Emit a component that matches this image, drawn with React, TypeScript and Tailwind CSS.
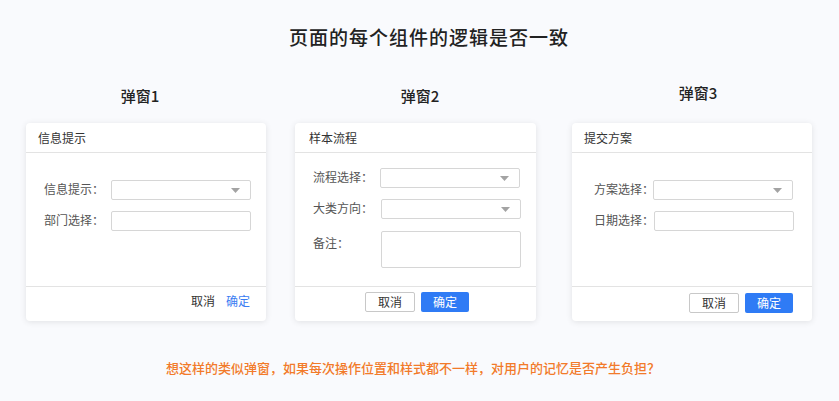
import React from "react";

const FONT = { fontFamily: '"Noto Sans CJK SC", "Noto Sans", sans-serif' };

function Caret() {
  return (
    <svg width="9" height="5" viewBox="0 0 9 5">
      <path d="M0 0 L9 0 L4.5 5 Z" fill="#a3a3a3" />
    </svg>
  );
}

function Select() {
  return (
    <div className="w-[140px] shrink-0 h-[20px] border border-[#d6d6d6] rounded-[2px] bg-white flex items-center justify-end pr-[10px]">
      <Caret />
    </div>
  );
}

function Input() {
  return <div className="w-[140px] shrink-0 h-[20px] border border-[#d6d6d6] rounded-[2px] bg-white" />;
}

function Row({ label, lw, children }: { label: string; lw: string; children: React.ReactNode }) {
  return (
    <div className="flex items-center h-[20px]">
      <div className={`${lw} shrink-0 whitespace-nowrap text-[12px] leading-[20px] text-[#555] pb-[2px]`}>{label}</div>
      {children}
    </div>
  );
}

function Header({ title, pl }: { title: string; pl: string }) {
  return (
    <div className={`h-[30px] border-b border-[#e3e3e3] flex items-center ${pl} text-[12px] text-[#333] pt-[1px]`}>
      {title}
    </div>
  );
}

export default function App() {
  return (
    <div className="w-[839px] h-[401px] bg-[#f9fafd] flex flex-col overflow-hidden" style={FONT}>
      <div className="pt-[23px] flex justify-center pl-[19px]">
        <span className="text-[19px] leading-[28px] tracking-[1px] font-medium text-[#222] whitespace-nowrap">
          页面的每个组件的逻辑是否一致
        </span>
      </div>

      <div className="mt-[32px] flex">
        {/* column 1 */}
        <div className="ml-[26px] w-[240px] flex flex-col">
          <div className="h-[40px] pt-[3px] pr-[12px] text-center text-[15px] leading-[20px] font-medium text-[#222]">弹窗1</div>
          <div className="h-[198px] bg-white rounded-[4px] shadow-[0_1px_6px_rgba(0,0,0,0.10)] flex flex-col">
            <Header title="信息提示" pl="pl-[12px]" />
            <div className="h-[133px] pt-[27px] pl-[18px] flex flex-col gap-[11px]">
              <Row label="信息提示：" lw="w-[67px]"><Select /></Row>
              <Row label="部门选择：" lw="w-[67px]"><Input /></Row>
            </div>
            <div className="h-[35px] border-t border-[#e3e3e3] flex items-center justify-end gap-[11px] pr-[16px] pb-[7px] text-[12px]">
              <span className="text-[#333]">取消</span>
              <span className="text-[#3a7cf2]">确定</span>
            </div>
          </div>
        </div>

        {/* column 2 */}
        <div className="ml-[29px] w-[241px] flex flex-col">
          <div className="h-[40px] pt-[3px] pl-[9px] text-center text-[15px] leading-[20px] font-medium text-[#222]">弹窗2</div>
          <div className="h-[198px] bg-white rounded-[4px] shadow-[0_1px_6px_rgba(0,0,0,0.10)] flex flex-col">
            <Header title="样本流程" pl="pl-[14px]" />
            <div className="h-[133px] pt-[15px] pl-[18px] flex flex-col">
              <Row label="流程选择：" lw="w-[67px]"><Select /></Row>
              <div className="h-[11px]" />
              <Row label="大类方向：" lw="w-[68px]"><Select /></Row>
              <div className="h-[12px]" />
              <div className="flex">
                <div className="w-[68px] shrink-0 pt-[2px] text-[12px] leading-[20px] text-[#555]">备注：</div>
                <div className="w-[140px] h-[37px] border border-[#d6d6d6] rounded-[2px] bg-white" />
              </div>
            </div>
            <div className="h-[35px] border-t border-[#e3e3e3] flex items-center justify-center gap-[6px] pl-[3px] pb-[4px] text-[12px]">
              <div className="w-[50px] h-[20px] border border-[#c8c8c8] rounded-[2px] bg-white text-[#333] flex items-center justify-center">取消</div>
              <div className="w-[48px] h-[20px] rounded-[2px] bg-[#2f7bf5] text-white flex items-center justify-center">确定</div>
            </div>
          </div>
        </div>

        {/* column 3 */}
        <div className="ml-[36px] w-[240px] flex flex-col">
          <div className="h-[40px] pt-[0px] pl-[12px] text-center text-[15px] leading-[20px] font-medium text-[#222]">弹窗3</div>
          <div className="h-[198px] bg-white rounded-[4px] shadow-[0_1px_6px_rgba(0,0,0,0.10)] flex flex-col">
            <Header title="提交方案" pl="pl-[12px]" />
            <div className="h-[133px] pt-[27px] pl-[22px] flex flex-col gap-[11px]">
              <Row label="方案选择：" lw="w-[59px]"><Select /></Row>
              <Row label="日期选择：" lw="w-[60px]"><Input /></Row>
            </div>
            <div className="h-[35px] border-t border-[#e3e3e3] flex items-center justify-end gap-[6px] pr-[19px] pb-[2px] text-[12px]">
              <div className="w-[50px] h-[20px] border border-[#c8c8c8] rounded-[2px] bg-white text-[#333] flex items-center justify-center">取消</div>
              <div className="w-[48px] h-[20px] rounded-[2px] bg-[#2f7bf5] text-white flex items-center justify-center">确定</div>
            </div>
          </div>
        </div>
      </div>

      <div className="mt-[37px] pr-[13px] text-center text-[13px] leading-[20px] font-medium text-[#f27a2a]">
        想这样的类似弹窗，如果每次操作位置和样式都不一样，对用户的记忆是否产生负担？
      </div>
    </div>
  );
}
